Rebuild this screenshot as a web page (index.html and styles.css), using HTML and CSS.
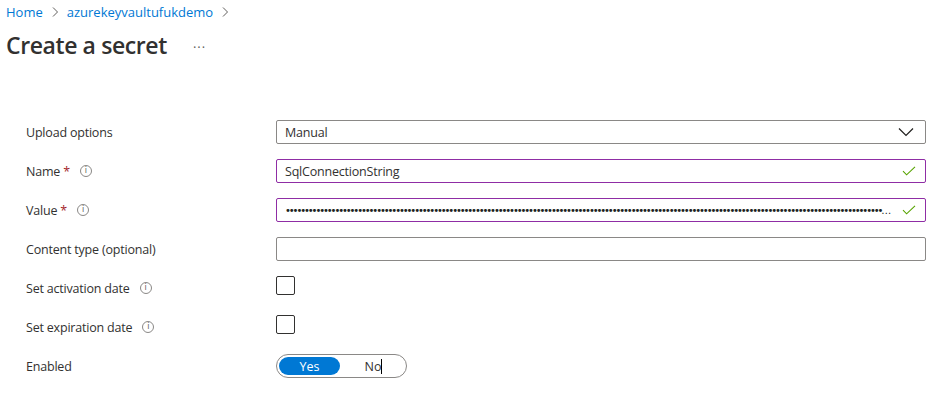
FILE: index.html
```html
<!DOCTYPE html>
<html lang="en">
<head>
<meta charset="UTF-8" />
<meta name="viewport" content="width=device-width, initial-scale=1" />
<title>Create a secret</title>
<link rel="stylesheet" href="styles.css">
</head>
<body>
  <nav class="breadcrumb">
    <a href="#">Home</a>
    <svg class="crumb-sep" viewBox="0 0 8 12" width="8" height="12"><path d="M2 1.5 L6.5 6 L2 10.5" fill="none" stroke="#605e5c" stroke-width="1"/></svg>
    <a href="#">azurekeyvaultufukdemo</a>
    <svg class="crumb-sep" viewBox="0 0 8 12" width="8" height="12"><path d="M2 1.5 L6.5 6 L2 10.5" fill="none" stroke="#605e5c" stroke-width="1"/></svg>
  </nav>

  <header class="page-header">
    <h1>Create a secret</h1>
    <span class="more">&middot;&middot;&middot;</span>
  </header>

  <form class="secret-form">
    <div class="row">
      <label class="label">Upload options</label>
      <div class="field">
        <span>Manual</span>
        <svg class="chevron" viewBox="0 0 16 10" width="16" height="10"><path d="M1 1.5 L8 8.5 L15 1.5" fill="none" stroke="#201f1e" stroke-width="1.2"/></svg>
      </div>
    </div>

    <div class="row">
      <label class="label">Name <span class="req">*</span> <i class="info">i</i></label>
      <div class="field valid">
        <span>SqlConnectionString</span>
        <svg class="check" viewBox="0 0 14 10" width="14" height="10"><path d="M1 5.2 L4.6 8.8 L13 0.8" fill="none" stroke="#57a300" stroke-width="1.1"/></svg>
      </div>
    </div>

    <div class="row">
      <label class="label">Value <span class="req">*</span> <i class="info">i</i></label>
      <div class="field valid">
        <span class="secret" id="secretDots"></span>
        <svg class="check" viewBox="0 0 14 10" width="14" height="10"><path d="M1 5.2 L4.6 8.8 L13 0.8" fill="none" stroke="#57a300" stroke-width="1.1"/></svg>
      </div>
    </div>

    <div class="row">
      <label class="label">Content type (optional)</label>
      <div class="field"></div>
    </div>

    <div class="row">
      <label class="label">Set activation date <i class="info">i</i></label>
      <div class="checkbox"></div>
    </div>

    <div class="row">
      <label class="label">Set expiration date <i class="info">i</i></label>
      <div class="checkbox"></div>
    </div>

    <div class="row">
      <label class="label">Enabled</label>
      <div class="toggle">
        <span class="opt active">Yes</span>
        <span class="opt">No<span class="caret"></span></span>
      </div>
    </div>
  </form>

<script>
  // masked secret value
  document.getElementById('secretDots').textContent = '\u2022'.repeat(200);
</script>
</body>
</html>
```

FILE: styles.css
```css
/* Base */
* {
  box-sizing: border-box;
}
body {
  margin: 0;
  font-family: 'Open Sans', 'Noto Sans', sans-serif;
  font-size: 13px;
  color: #323130;
  background: #fff;
}

/* Breadcrumb */
.breadcrumb {
  display: flex;
  align-items: center;
  gap: 7px;
  padding: 3px 6px 0;
  height: 21px;
}
.breadcrumb a {
  color: #0078d4;
  text-decoration: none;
  font-size: 13px;
}
.crumb-sep {
  margin: 0 1px;
}

/* Title */
.page-header {
  display: flex;
  align-items: center;
  padding: 6px 6px 0;
  height: 42px;
}
h1 {
  margin: 0;
  font-size: 23px;
  font-weight: 600;
  color: #323130;
  letter-spacing: -0.4px;
}
.more {
  margin-left: 26px;
  margin-top: 4px;
  color: #605e5c;
  font-size: 13px;
  letter-spacing: 1px;
}

/* Form */
.secret-form {
  display: flex;
  flex-direction: column;
  gap: 15px;
  padding: 57px 0 0 26px;
}
.row {
  display: grid;
  grid-template-columns: 250px 650px;
  height: 24px;
}
.label {
  display: flex;
  align-items: center;
  gap: 4px;
  font-size: 12.5px;
  letter-spacing: -0.2px;
}
.req {
  color: #a4262c;
  margin-left: -1px;
}
.info {
  display: inline-flex;
  justify-content: center;
  align-items: center;
  width: 12px;
  height: 12px;
  margin-left: 6px;
  border: 1px solid #8a8886;
  border-radius: 50%;
  font-style: normal;
  font-size: 8px;
  line-height: 1;
  color: #605e5c;
  font-family: 'DejaVu Sans', sans-serif;
}

.field {
  display: flex;
  align-items: center;
  justify-content: space-between;
  height: 24px;
  padding: 0 9px 0 8px;
  border: 1px solid #8a8886;
  border-radius: 2px;
  font-size: 12.5px;
  letter-spacing: -0.2px;
  color: #323130;
}
.field.valid {
  border-color: #8f2da5;
}
.secret {
  flex: 1;
  min-width: 0;
  overflow: hidden;
  white-space: nowrap;
  text-overflow: ellipsis;
  font-family: 'DejaVu Sans', sans-serif;
  font-size: 10px;
  letter-spacing: -2.1px;
  color: #201f1e;
  margin-right: 8px;
}
.chevron {
  margin-right: 2px;
}
.check {
  flex: none;
}

/* Checkbox */
.checkbox {
  width: 19px;
  height: 19px;
  border: 1px solid #323130;
  border-radius: 2px;
}

/* Yes / No toggle */
.toggle {
  display: flex;
  align-items: center;
  width: 131px;
  height: 24px;
  padding: 0 2px;
  border: 1px solid #8a8886;
  border-radius: 12px;
}
.opt {
  display: flex;
  justify-content: center;
  align-items: center;
  width: 62px;
  height: 18px;
  border-radius: 9px;
  font-size: 12.5px;
  color: #323130;
}
.opt.active {
  background: #0078d4;
  color: #fff;
}
.opt + .opt {
  margin-left: 3px;
}
.caret {
  display: inline-block;
  width: 1px;
  height: 15px;
  background: #000;
}
```
